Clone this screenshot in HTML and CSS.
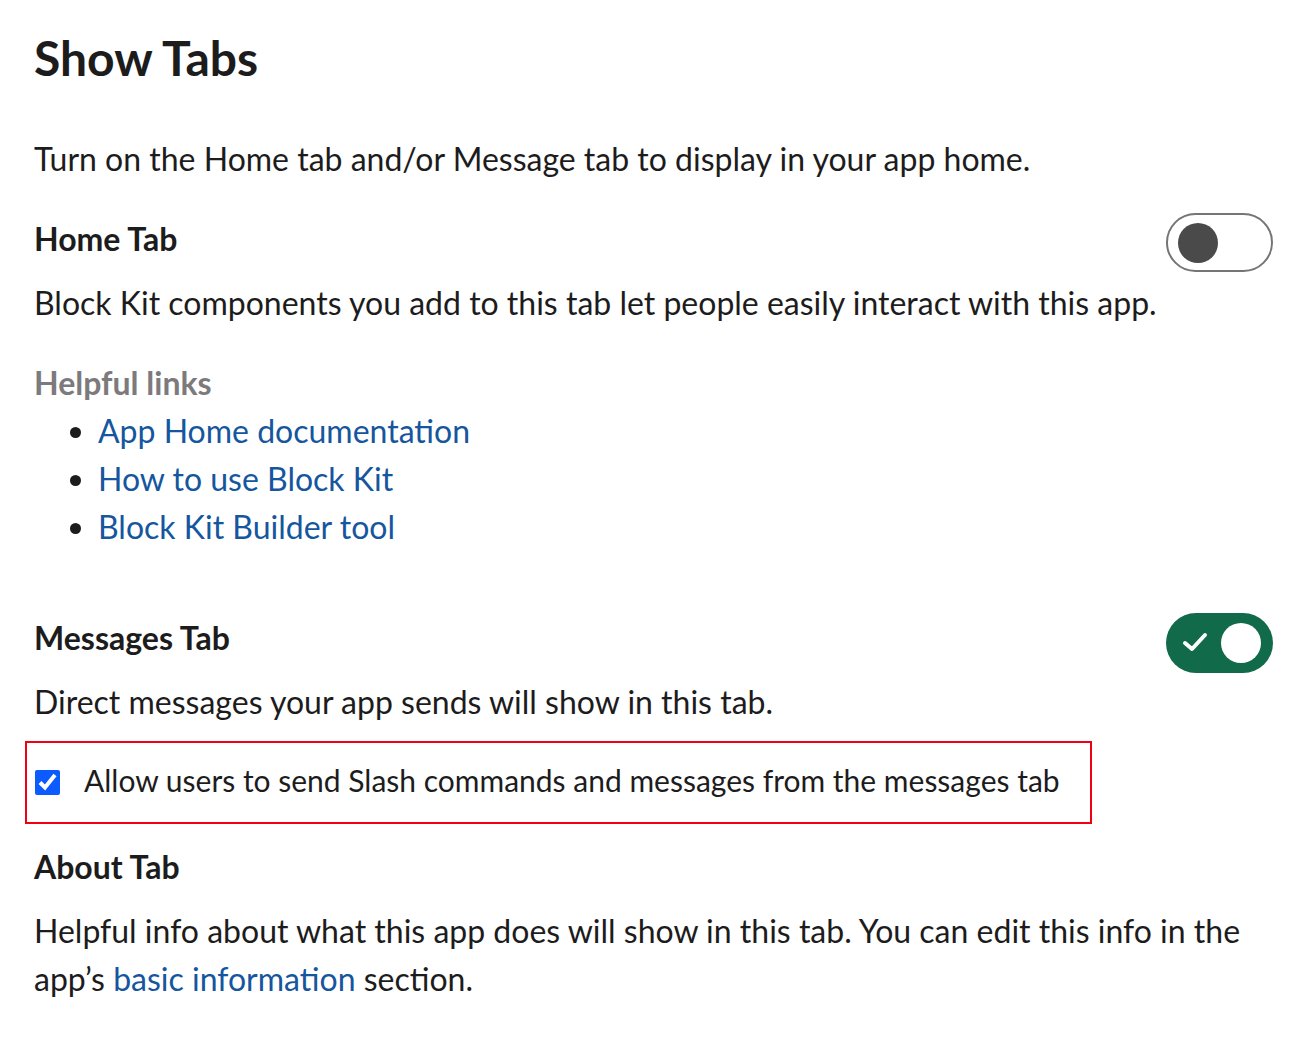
FILE: index.html
```html
<!DOCTYPE html>
<html lang="en">
<head>
  <meta charset="UTF-8">
  <title>Show Tabs</title>
  <link rel="stylesheet" href="styles.css">
</head>
<body>
  <div class="page">
    <h1>Show Tabs</h1>
    <p class="intro">Turn on the Home tab and/or Message tab to display in your app home.</p>

    <!-- Home tab -->
    <div class="tab-row">
      <h3>Home Tab</h3>
      <span class="toggle off"><span class="knob"></span></span>
    </div>
    <p class="desc">Block Kit components you add to this tab let people easily interact with this app.</p>
    <div class="helpful">
      <h4>Helpful links</h4>
      <ul>
        <li><a href="#">App Home documentation</a></li>
        <li><a href="#">How to use Block Kit</a></li>
        <li><a href="#">Block Kit Builder tool</a></li>
      </ul>
    </div>

    <!-- Messages tab -->
    <div class="tab-row messages">
      <h3>Messages Tab</h3>
      <span class="toggle on">
        <svg class="check" width="26" height="22" viewBox="0 0 26 22"><path d="M3 12 L10 18 L23 4" fill="none" stroke="#fff" stroke-width="4" stroke-linecap="round" stroke-linejoin="round"/></svg>
        <span class="knob"></span>
      </span>
    </div>
    <p class="desc">Direct messages your app sends will show in this tab.</p>
    <label class="allow">
      <input type="checkbox" checked>
      <span>Allow users to send Slash commands and messages from the messages tab</span>
    </label>

    <!-- About tab -->
    <div class="tab-row about">
      <h3>About Tab</h3>
    </div>
    <p class="desc">Helpful info about what this app does will show in this tab. You can edit this info in the app’s <a href="#">basic information</a> section.</p>
  </div>
</body>
</html>
```

FILE: styles.css
```css
* {
  box-sizing: border-box;
}

body {
  margin: 0;
  background: #fff;
  color: #1d1c1d;
  font-family: Lato, "Noto Sans", sans-serif;
}

.page {
  padding: 24px 40px 0 34px;
}

h1 {
  margin: 0;
  font-size: 48px;
  font-weight: 700;
  line-height: 68px;
}

p {
  margin: 0;
  font-size: 32px;
  line-height: 48px;
}

.intro {
  margin-top: 43px;
}

.tab-row {
  display: flex;
  justify-content: space-between;
  align-items: center;
  margin-top: 29px;
  height: 60px;
}

.tab-row h3 {
  margin: 0 0 8px 0;
  font-size: 32px;
  font-weight: 700;
}

.tab-row.messages {
  margin-top: 60px;
}

.tab-row.about {
  margin-top: 16px;
}

.desc {
  margin-top: 7px;
}

a {
  color: #15569e;
  text-decoration: none;
}

.helpful {
  margin-top: 32px;
}

.helpful h4 {
  margin: 0;
  font-size: 32px;
  font-weight: 700;
  color: #7c7a7c;
  line-height: 48px;
}

.helpful ul {
  margin: 0;
  padding-left: 64px;
  font-size: 32px;
  line-height: 48px;
}

.toggle {
  position: relative;
  display: inline-block;
  width: 107px;
  height: 59px;
  border-radius: 30px;
  margin-right: -1px;
}

.toggle.off {
  border: 2px solid #767476;
  background: #fff;
}

.toggle.off .knob {
  position: absolute;
  left: 10px;
  top: 8px;
  width: 40px;
  height: 40px;
  border-radius: 50%;
  background: #4a4a4a;
}

.toggle.on {
  height: 60px;
  margin-top: 4px;
  background: #116a49;
}

.toggle.on .knob {
  position: absolute;
  right: 12px;
  top: 10px;
  width: 40px;
  height: 40px;
  border-radius: 50%;
  background: #fff;
}

.toggle .check {
  position: absolute;
  left: 16px;
  top: 18px;
}

.allow {
  display: flex;
  align-items: center;
  gap: 24px;
  width: 1067px;
  height: 83px;
  margin: 15px 0 0 -9px;
  padding: 0 0 6px 8px;
  border: 2px solid #f00010;
  font-size: 30px;
}

.allow input {
  width: 25px;
  height: 25px;
  margin: 6px 0 0 0;
  accent-color: #0b5bff;
}
```
